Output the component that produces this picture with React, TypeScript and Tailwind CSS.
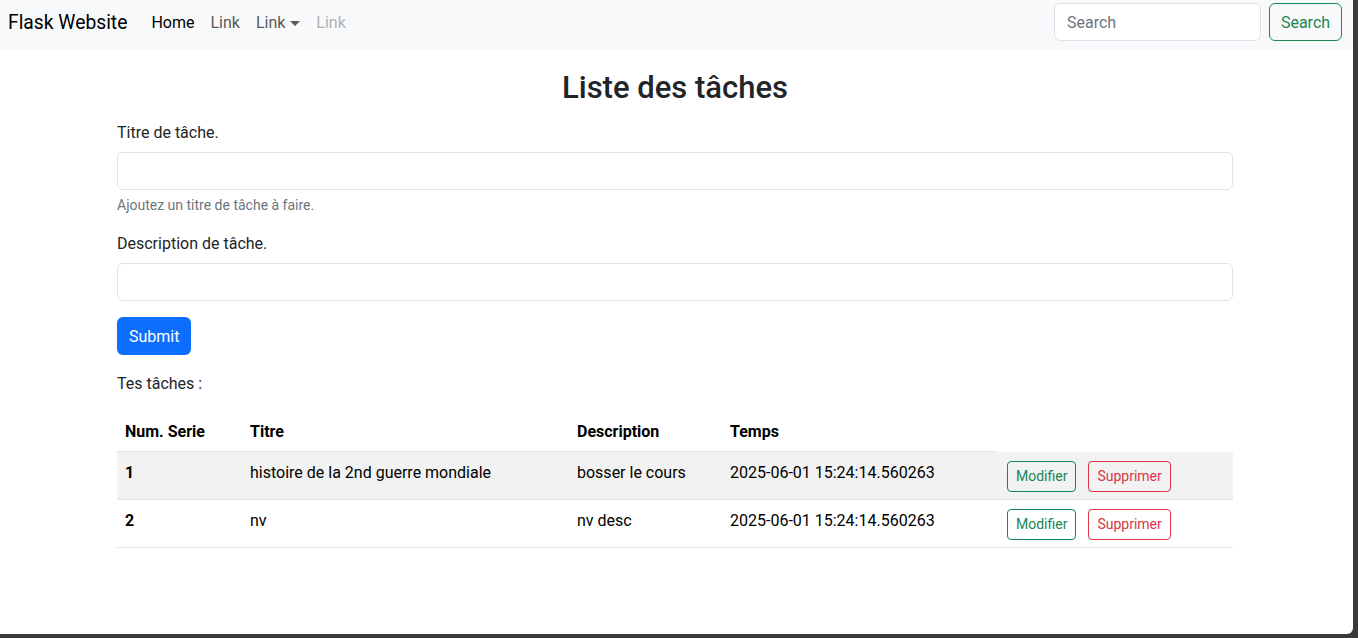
import React from "react";

const tasks = [
  {
    id: 1,
    title: "histoire de la 2nd guerre mondiale",
    desc: "bosser le cours",
    time: "2025-06-01 15:24:14.560263",
  },
  {
    id: 2,
    title: "nv",
    desc: "nv desc",
    time: "2025-06-01 15:24:14.560263",
  },
];

const Navbar: React.FC = () => {
  return (
    <nav className="h-[50px] bg-[#f8f9fa] flex items-start pt-[3px] pl-2 pr-[11px]">
      <div className="h-[40px] flex items-center text-[19.3px] text-black mr-4">
        Flask Website
      </div>
      <ul className="flex h-[40px] items-center text-[16px]">
        <li className="px-2 text-black">Home</li>
        <li className="px-2 text-[#595959]">Link</li>
        <li className="px-2 text-[#595959] flex items-center">
          Link
          <span className="ml-[5px] inline-block w-0 h-0 border-x-[5px] border-x-transparent border-t-[5px] border-t-[#595959]" />
        </li>
        <li className="px-2 text-[#b3b3b3]">Link</li>
      </ul>
      <form className="ml-auto flex gap-2">
        <input
          type="search"
          placeholder="Search"
          className="w-[207px] h-[38px] bg-white border border-[#dee2e6] rounded-md px-3 text-[16px] placeholder:text-[#6c757d] outline-none"
        />
        <button
          type="button"
          className="w-[73px] h-[38px] pt-[2px] border border-[#198754] text-[#198754] rounded-md text-[16px]">
          Search
        </button>
      </form>
    </nav>
  );
};

export default function App() {
  return (
    <div className="w-[1358px] h-[638px] bg-[#3a3a3a] font-['Roboto',sans-serif] overflow-hidden">
      <div className="w-[1353px] h-[634px] bg-white rounded-br-md overflow-hidden text-[#212529] text-[16px] leading-6">
        <Navbar />

        <div className="ml-[117px] w-[1116px]">
          <h1 className="mt-[18px] h-[38px] leading-[40px] text-[31px] font-medium text-center">
            Liste des tâches
          </h1>

          <form className="mt-[14px]">
            <label className="block mb-2 leading-[26px] h-6">Titre de tâche.</label>
            <input
              type="text"
              className="block w-full h-[38px] border border-[#dee2e6] rounded-md px-3 outline-none"
            />
            <div className="mt-1 text-[14px] leading-[23px] h-[21px] text-[#6c757d]">
              Ajoutez un titre de tâche à faire.
            </div>

            <label className="block mt-4 mb-2 leading-[26px] h-6">
              Description de tâche.
            </label>
            <input
              type="text"
              className="block w-full h-[38px] border border-[#dee2e6] rounded-md px-3 outline-none"
            />

            <button
              type="button"
              className="mt-4 h-[38px] px-3 pt-[2px] bg-[#0d6efd] text-white rounded-md">
              Submit
            </button>
          </form>

          <p className="mt-4 h-6 leading-[26px]">Tes tâches :</p>

          <table className="mt-4 w-full table-fixed border-collapse text-black">
            <colgroup>
              <col className="w-[125px]" />
              <col className="w-[327px]" />
              <col className="w-[153px]" />
              <col className="w-[273px]" />
              <col className="w-[238px]" />
            </colgroup>
            <thead>
              <tr>
                <th className="px-2 pt-[9px] pb-[7px] text-left font-bold border-b border-[#dee2e6]">
                  Num. Serie
                </th>
                <th className="px-2 pt-[9px] pb-[7px] text-left font-bold border-b border-[#dee2e6]">
                  Titre
                </th>
                <th className="px-2 pt-[9px] pb-[7px] text-left font-bold border-b border-[#dee2e6]">
                  Description
                </th>
                <th className="px-2 pt-[9px] pb-[7px] text-left font-bold border-b border-[#dee2e6]">
                  Temps
                </th>
              </tr>
            </thead>
            <tbody>
              {tasks.map((t, i) => (
                <tr
                  key={t.id}
                  className={`border-b border-[#dee2e6] ${i % 2 === 0 ? "bg-[#f2f2f2]" : "bg-white"}`}>
                  <th className="px-2 pt-[9px] text-left font-bold align-top">{t.id}</th>
                  <td className="px-2 pt-[9px] align-top">{t.title}</td>
                  <td className="px-2 pt-[9px] align-top">{t.desc}</td>
                  <td className="px-2 pt-[9px] align-top">{t.time}</td>
                  <td className="pt-[9px] pb-[7px] pl-3 pr-2 align-top">
                    <div className="flex gap-3">
                      <button
                        type="button"
                        className="h-[31px] px-2 border border-[#198754] text-[#198754] rounded text-[14px]">
                        Modifier
                      </button>
                      <button
                        type="button"
                        className="h-[31px] px-2 border border-[#dc3545] text-[#dc3545] rounded text-[14px]">
                        Supprimer
                      </button>
                    </div>
                  </td>
                </tr>
              ))}
            </tbody>
          </table>
        </div>
      </div>
    </div>
  );
}
